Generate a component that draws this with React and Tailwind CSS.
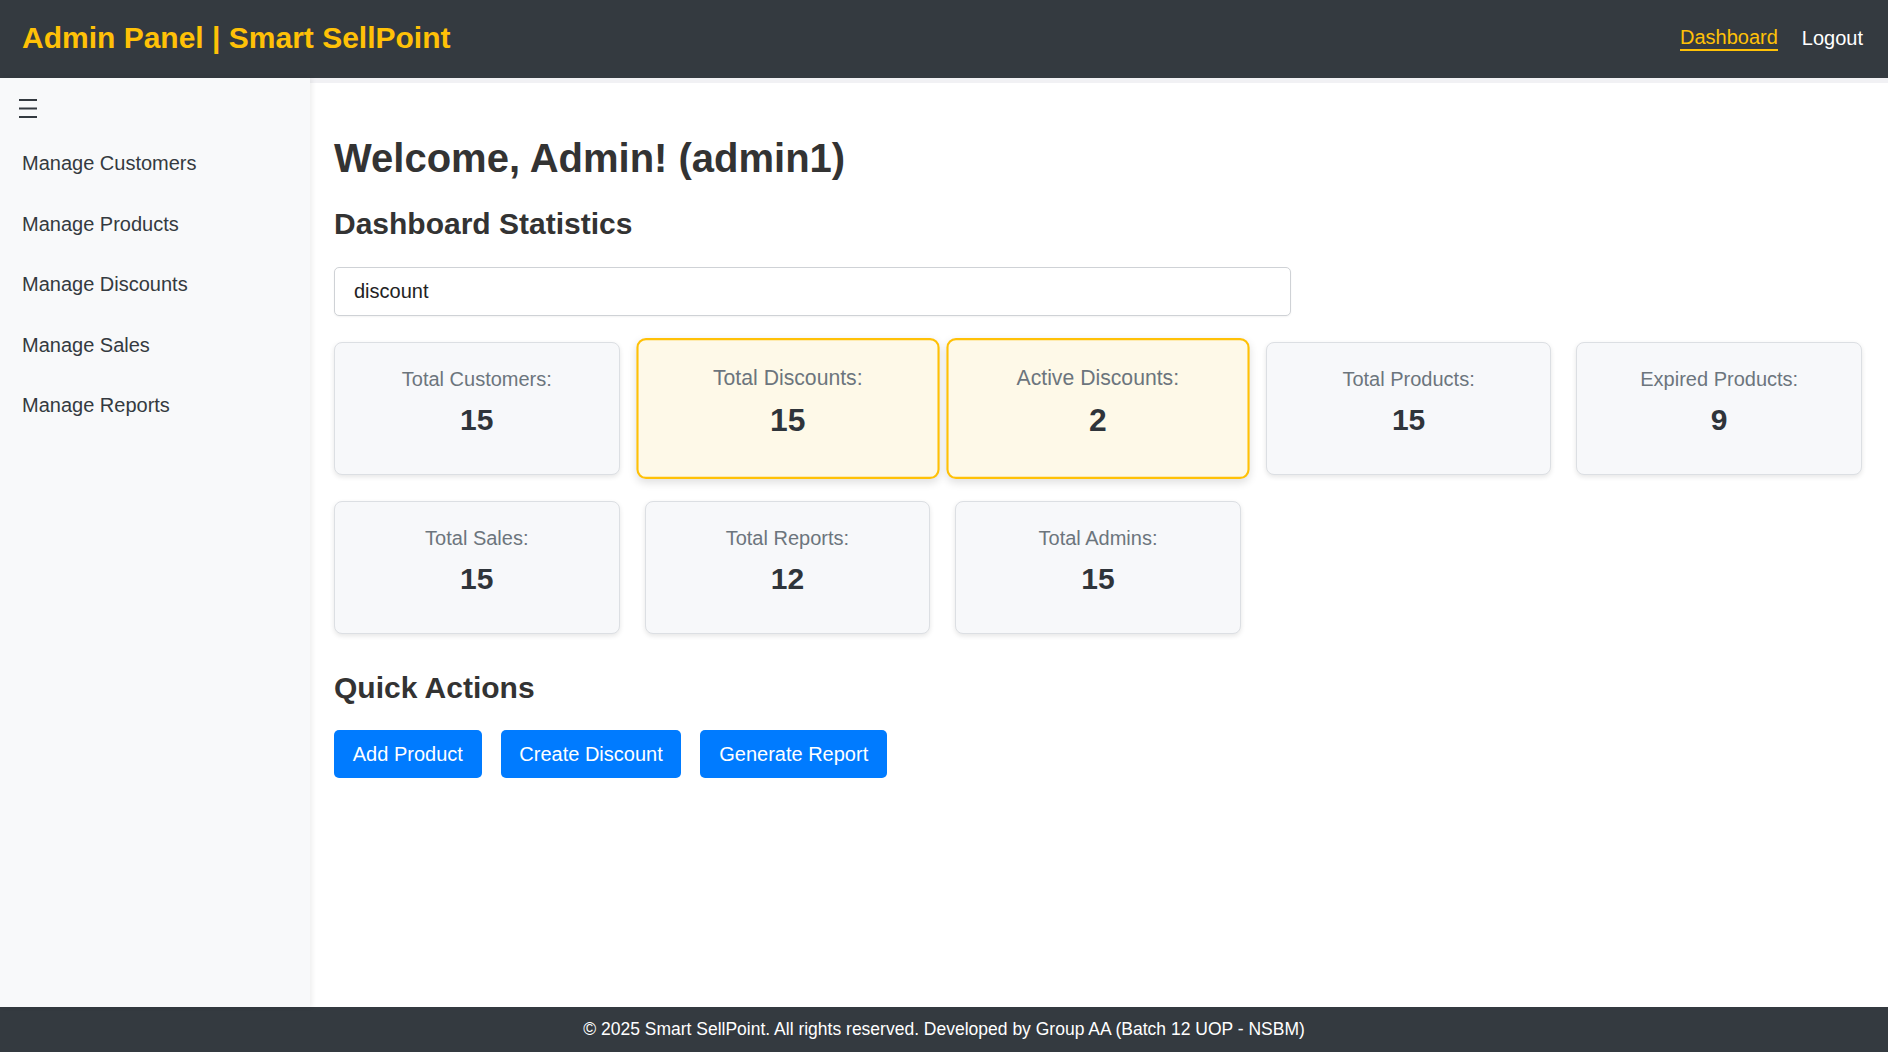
import React from 'react';

const NAV_ITEMS = ['Manage Customers', 'Manage Products', 'Manage Discounts', 'Manage Sales', 'Manage Reports'];

const STATS = [
  { label: 'Total Customers:', value: 15 },
  { label: 'Total Discounts:', value: 15, highlight: true },
  { label: 'Active Discounts:', value: 2, highlight: true },
  { label: 'Total Products:', value: 15 },
  { label: 'Expired Products:', value: 9 },
  { label: 'Total Sales:', value: 15 },
  { label: 'Total Reports:', value: 12 },
  { label: 'Total Admins:', value: 15 },
];

const ACTIONS = ['Add Product', 'Create Discount', 'Generate Report'];

function StatCard({ label, value, highlight }) {
  return (
    <div
      className={
        highlight
          ? 'h-[133px] flex flex-col items-center pt-[24px] rounded-[9px] border-2 border-[#ffc107] bg-[#fef9e8] scale-[1.06] shadow-[0_3px_8px_rgba(0,0,0,0.12)]'
          : 'h-[133px] flex flex-col items-center pt-[25px] rounded-[8px] border border-[#dcdfe3] bg-[#f7f8fa] shadow-[0_2px_5px_rgba(0,0,0,0.1)]'
      }
    >
      <div className="text-[20px] leading-[23px] text-[#6c757d]">{label}</div>
      <div className="mt-[11px] text-[30px] leading-[35px] font-bold text-[#2f343a]">{value}</div>
    </div>
  );
}

export default function App() {
  return (
    <div className="h-[1052px] flex flex-col font-['Liberation_Sans',Arial,sans-serif] text-[#333]">
      <header className="h-[78px] shrink-0 bg-[#343a40] flex items-center justify-between pl-[22px] pr-[25px]">
        <h1 className="mb-[4px] text-[30px] font-bold text-[#ffc107]">Admin Panel | Smart SellPoint</h1>
        <nav className="mb-[2px] flex items-center gap-[24px] text-[20px] leading-[23px]">
          <a className="text-[#ffc107] border-b-2 border-[#ffc107]">Dashboard</a>
          <a className="text-white">Logout</a>
        </nav>
      </header>

      <div className="flex-1 flex min-h-0">
        <aside className="w-[310px] shrink-0 bg-[#f8f9fa] relative z-10 shadow-[2px_0_5px_rgba(0,0,0,0.07)]">
          <div className="h-[55.5px] pt-[21px] pl-[19px]">
            <svg width="18" height="19" viewBox="0 0 18 19">
              <rect x="0" y="0" width="18" height="2" fill="#343a40" />
              <rect x="0" y="8.5" width="18" height="2" fill="#343a40" />
              <rect x="0" y="17" width="18" height="2" fill="#343a40" />
            </svg>
          </div>
          <ul>
            {NAV_ITEMS.map((item) => (
              <li key={item} className="pl-[22px] py-[18.75px] text-[20px] leading-[23px] text-[#343a40]">
                {item}
              </li>
            ))}
          </ul>
        </aside>

        <main className="flex-1 bg-[#f1f1f4] pt-[5px] flex flex-col">
          <div className="flex-1 bg-white pl-[24px] pr-[26px] pt-[51.5px]">
            <h1 className="text-[40px] leading-[46px] font-bold text-[#333]">Welcome, Admin! (admin1)</h1>
            <h2 className="mt-[26.5px] text-[30px] leading-[34.5px] font-bold text-[#333]">Dashboard Statistics</h2>

            <input
              type="text"
              defaultValue="discount"
              className="mt-[25.5px] block w-[957px] h-[49px] px-[19px] text-[20px] text-[#222] bg-white border border-[#cfd2d6] rounded-[5px] shadow-[0_1px_2px_rgba(0,0,0,0.05)] outline-none"
            />

            <div className="mt-[26px] grid grid-cols-5 gap-x-[25px] gap-y-[25.5px]">
              {STATS.map((s) => (
                <StatCard key={s.label} {...s} />
              ))}
            </div>

            <h2 className="mt-[37.5px] text-[30px] leading-[34.5px] font-bold text-[#333]">Quick Actions</h2>

            <div className="mt-[24.5px] flex gap-[19px]">
              {ACTIONS.map((a) => (
                <button
                  key={a}
                  className="h-[48px] px-[18.75px] bg-[#007bff] text-white text-[20px] rounded-[5px]"
                >
                  {a}
                </button>
              ))}
            </div>
          </div>
        </main>
      </div>

      <footer className="h-[45px] shrink-0 bg-[#343a40] flex items-center justify-center text-[17.5px] text-white">
        © 2025 Smart SellPoint. All rights reserved. Developed by Group AA (Batch 12 UOP - NSBM)
      </footer>
    </div>
  );
}
